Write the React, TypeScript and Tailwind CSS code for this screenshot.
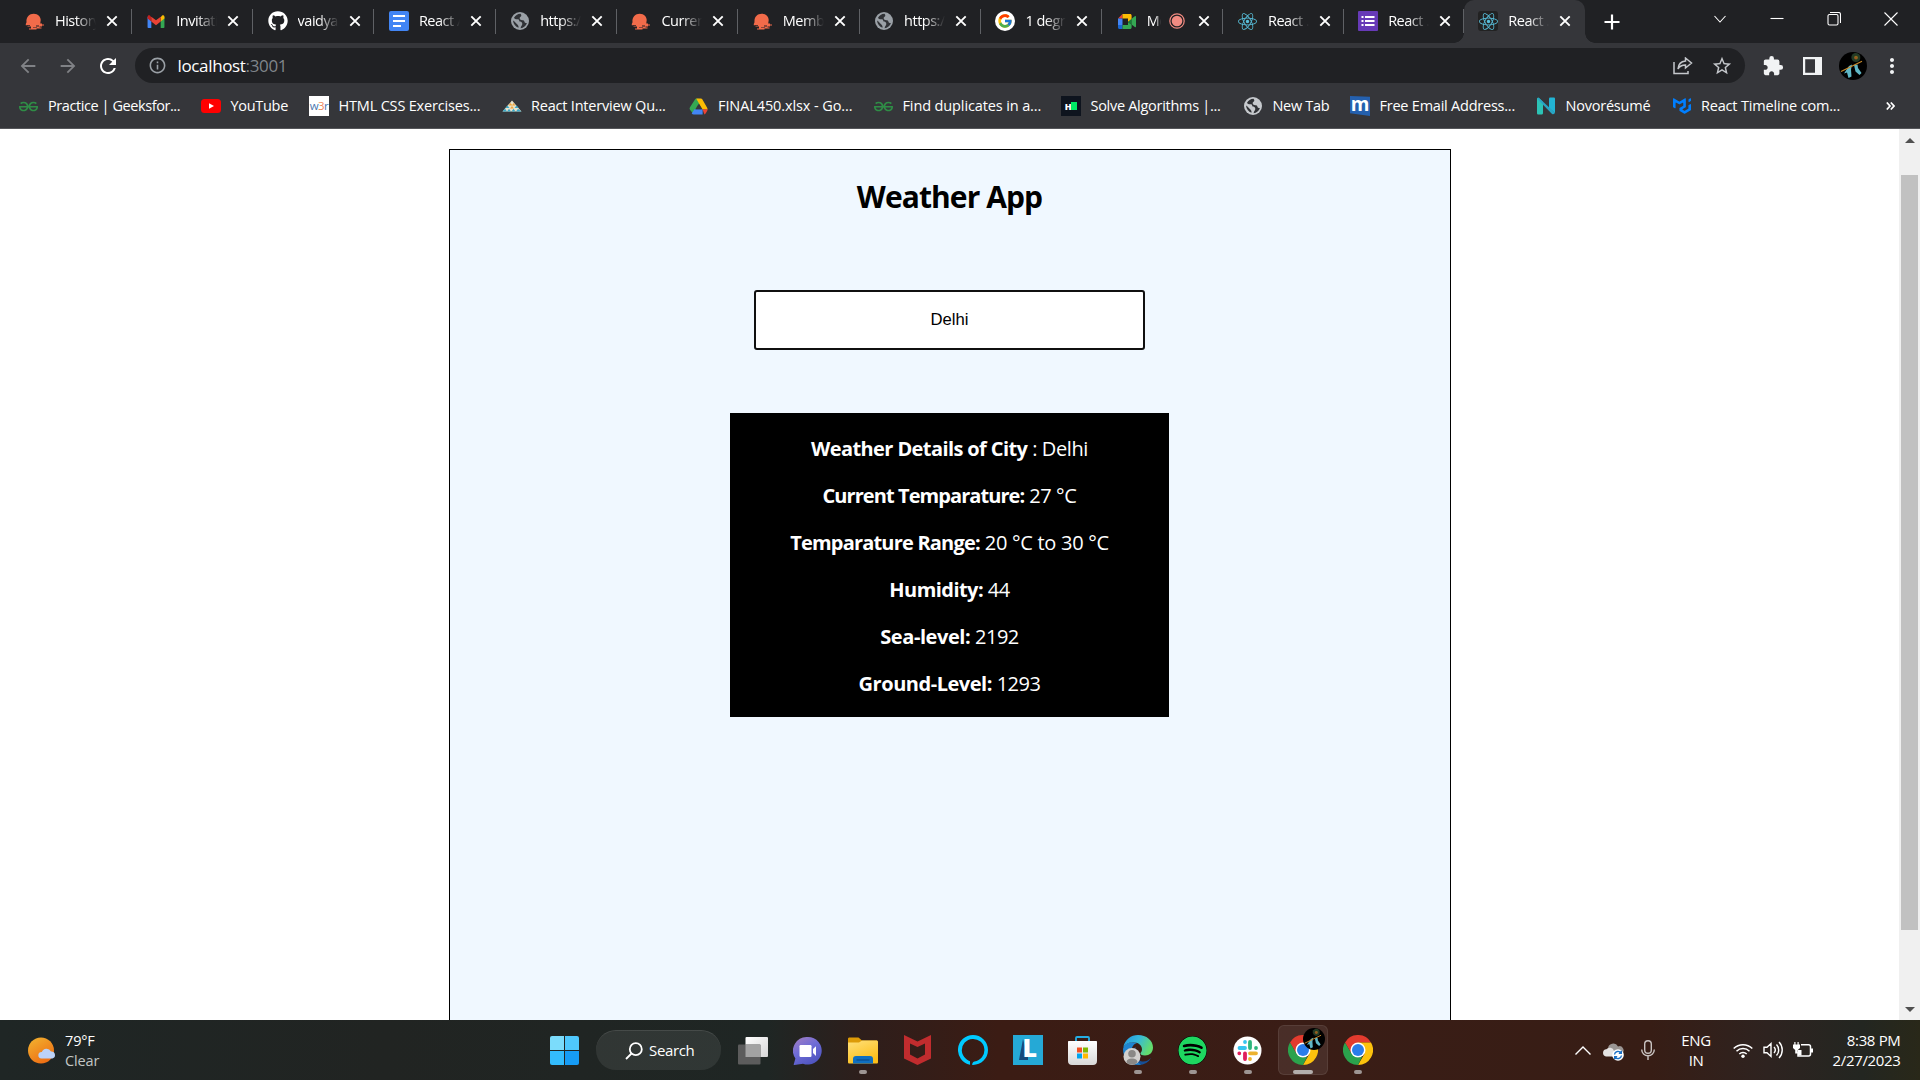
import type { ReactNode } from "react";
import { FaGithub, FaSpotify, FaReact } from "react-icons/fa";
import { FcGoogle } from "react-icons/fc";
import { SiGeeksforgeeks, SiMui } from "react-icons/si";
import { MdArrowBack, MdArrowForward, MdRefresh, MdInfoOutline, MdStarBorder, MdExtension, MdMoreVert } from "react-icons/md";

const PostmanHead = () => (
  <svg viewBox="0 0 20 17" className="h-[17px] w-5">
    <path fill="#f26b4a" d="M1.500 9.200C1 3.800 4.400.7 8.700.7c4.500 0 7.100 3.200 7 6.600-.1 1.200-.5 2.100-.4 3.100h1.700v1h2v1.200h-2v1h-2.500v1h2v1h-5v.8H4v-1h2v-1.800H2.500v-1.400H.8v-1.300z" />
    <path fill="#202124" d="M2 11.900h3v.8H2zM11 12.600h3v.8h-3zM8 14.400h4v.7H8z" />
  </svg>
);
const Gmail = () => (
  <svg viewBox="0 0 20 16" className="h-[15px] w-5">
    <path fill="#4285f4" d="M1 3v11.200c0 .5.400.8.800.8H5V7.500z" />
    <path fill="#34a853" d="M19 3v11.200c0 .5-.4.8-.8.8H15V7.500z" />
    <path fill="#fbbc04" d="M15 3.500l1.500-1.800C17.600.9 19 1.600 19 3v1.700L15 8z" />
    <path fill="#c5221f" d="M5 3.500L3.500 1.700C2.400.9 1 1.600 1 3v1.700L5 8z" />
    <path fill="#ea4335" d="M5 8V2.800l5 3.900 5-3.900V8l-5 3.900z" />
  </svg>
);
const Docs = () => (
  <svg viewBox="0 0 20 20" className="size-5">
    <rect width="20" height="20" rx="2" fill="#4285f4" />
    <path stroke="#fff" strokeWidth="2.200" d="M4 5h12M4 10h12M4 15h8" />
  </svg>
);
const Globe = ({ color = "#9aa0a6" }: { color?: string }) => (
  <svg viewBox="0 0 20 20" className="size-5">
    <circle cx="10" cy="10" r="9" fill={color} />
    <path fill="#303236" d="M10.500 2.800c-3 .2-5.200 1.600-6.500 4 .6 1.500 2.300 1.600 3.800 1.500 1.400 0 1.600 1 1.300 1.900 1.800.4 3.200.8 3.200 2.500 0 1.800-1.400 2.200-1.700 4.600 2.900-.3 5.500-2.400 6.300-5.300-1.200.3-2.400-.2-2.500-1.400-.2-1.600-1.800-1.300-3.200-1.600-1.700-.4-2.100-2.300-.7-3.200 1-.6 1.200-1.700 0-3z" />
    <path fill="#303236" d="M3 9.500c.3 3.300 2.600 6.200 5.500 7.300.2-1.700-.3-2.600-1.400-3.500C5.600 12.100 4.800 10.400 3 9.500z" />
  </svg>
);
const GoogleG = () => (
  <span className="flex size-5 items-center justify-center rounded-full bg-white"><FcGoogle className="size-4" /></span>
);
const Meet = () => (
  <svg viewBox="0 0 20 17" className="h-[17px] w-5">
    <path fill="#ea4335" d="M1 5.500L5.500 1v4.500z" />
    <path fill="#4285f4" d="M1 5.500h4.500v6.500H1z" />
    <path fill="#1967d2" d="M1 12h4.500v4H2.500C1.600 16 1 15.400 1 14.500z" />
    <path fill="#fbbc04" d="M5.500 1h7.500c1 0 1.600.6 1.600 1.500v3.700L11 9V5.500H5.500z" />
    <path fill="#34a853" d="M5.500 12H11V9l3.600 2.700v2.800c0 .9-.6 1.500-1.600 1.500H5.500z" />
    <path fill="#188038" d="M11 9l3.600-3.200v6z" />
    <path fill="#34a853" d="M14.600 5.800l3.200-2.600c.6-.4 1.200-.1 1.200.5v9.900c0 .6-.6.9-1.200.4l-3.200-2.600z" />
  </svg>
);
const Forms = () => (
  <svg viewBox="0 0 20 20" className="size-5">
    <rect width="20" height="20" rx="1" fill="#673ab7" />
    <path stroke="#fff" strokeWidth="2.200" d="M7 6h9.500M7 10h9.500M7 14h9.500" />
    <path stroke="#fff" strokeWidth="2.200" d="M3.500 6h2M3.500 10h2M3.500 14h2" />
  </svg>
);
const ReactIcon = () => (
  <span className="flex size-5 items-center justify-center rounded-[3px] bg-[#222222]"><FaReact className="size-[19px] text-[#61dafb]/85" /></span>
);
const YouTube = () => (
  <svg viewBox="0 0 20 14" className="h-[14px] w-5"><rect width="20" height="14" rx="3.500" fill="#f00" /><path fill="#fff" d="M8 4.200v5.600l5-2.800z" /></svg>
);
const W3r = () => (
  <span className="flex size-5 items-center justify-center bg-white font-['Open_Sans'] text-[11.5px] tracking-[-0.6px] text-[#4c78b0]">w<span className="text-[#f0875a]">3</span>r</span>
);
const Pyramid = () => (
  <svg viewBox="0 0 20 12" className="h-3 w-5">
    <path fill="#e9e3cc" d="M10 .5L19.500 11.500H.5z" />
    <path fill="#3ba9c9" d="M.5 11.500l2.500-3 2 3zM5 11.500l2-2.800 2 2.800zM9.500 11.500l2-2.800 2 2.800zM14 11.500l2-2.800 3.500 2.800zM3.500 8l2-2.500 2 2.500zM12.500 8l2-2.500 2 2.500z" />
    <path fill="#f0a63c" d="M6.500 5.500L8.500 3l2 2.500zM10 5.500L11.500 3l2 2.500zM8 8.500l2-2.500 2 2.500z" />
  </svg>
);
const Drive = () => (
  <svg viewBox="0 0 20 18" className="h-[17px] w-[19px]">
    <path fill="#34a853" d="M6.800.8h3.400L12 4 4.500 17 1 12.500c-.6-1-.6-1.600 0-2.600z" />
    <path fill="#fbbc04" d="M7.500.5h5c.7 0 1.200.3 1.500.9l5.300 9.300c.2.500.2 1 .2 1.500h-5.200z" />
    <path fill="#4285f4" d="M5.700 12h8.700v5.500H5c-1 0-1.600-.4-2.200-1.200z" />
    <path fill="#ea4335" d="M14.200 12h5.400c0 .8-.2 1.300-.6 2l-1.500 2.500c-.3.500-.8.800-1.200 1z" />
    <path fill="#35363a" d="M10 6.300l3.300 5.700H6.700z" />
  </svg>
);
const Hacker = () => (
  <span className="flex size-5 items-center justify-center bg-[#0e141e]">
    <span className="text-[9px] font-black leading-none text-white">H</span><span className="h-2 w-[6px] bg-[#00ea64]" />
  </span>
);
const MailM = () => (
  <span className="flex size-5 items-center justify-center bg-[#2460ae] pb-1 font-['Open_Sans'] text-[19px] leading-none font-bold text-white [clip-path:polygon(0_0,100%_4%,100%_100%,0_86%)]">m</span>
);
const Novo = () => (
  <svg viewBox="0 0 20 18" className="h-[18px] w-5">
    <path fill="#2cc3b5" d="M1 2C1 .8 2.500.4 3.300 1.300L7 5v11c0 1-.8 1.500-1.600 1.500H2.500C1.600 17.500 1 17 1 16z" />
    <path fill="#22b4d4" d="M13 2c0-.9.600-1.400 1.500-1.400h3C18.500.6 19 1.100 19 2v14l-6-5z" />
    <path fill="#28a5c4" d="M3 .9L19 15.800c-.5 1.500-2 1.900-3.200.9L1.200 1.800C1.500.9 2.300.5 3 .9z" />
  </svg>
);

type Tab = { title: string; icon: ReactNode; rec?: boolean; active?: boolean; w: string };
const wide = "w-[121.3px]";
const narrow = "w-[120.2px]";
const tabs: Tab[] = [
  { title: "History", icon: <PostmanHead />, w: wide },
  { title: "Invitati", icon: <Gmail />, w: wide },
  { title: "vaidya", icon: <FaGithub className="size-5 text-white" />, w: wide },
  { title: "React A", icon: <Docs />, w: wide },
  { title: "https://", icon: <Globe />, w: wide },
  { title: "Curren", icon: <PostmanHead />, w: wide },
  { title: "Memb", icon: <PostmanHead />, w: wide },
  { title: "https://", icon: <Globe />, w: wide },
  { title: "1 degr", icon: <GoogleG />, w: wide },
  { title: "Me", icon: <Meet />, rec: true, w: wide },
  { title: "React .", icon: <ReactIcon />, w: narrow },
  { title: "React .", icon: <Forms />, w: narrow },
  { title: "React .", icon: <ReactIcon />, active: true, w: wide },
];

const Cross = () => (
  <svg viewBox="0 0 12 12" className="size-3 shrink-0"><path stroke="#fff" strokeWidth="1.900" d="M1.300 1.300l9.400 9.400M10.700 1.300l-9.400 9.400" /></svg>
);

const TabItem = ({ tab }: { tab: Tab }) => (
  <div className={`relative flex h-full shrink-0 items-center pb-px pl-[14.5px] ${tab.w} ${tab.active ? "rounded-t-[10px] bg-[#35363a]" : ""}`}>
    {tab.active && (
      <>
        <span className="absolute bottom-0 -left-[10px] size-[10px] bg-[radial-gradient(circle_at_0_0,#202124_9.5px,#35363a_10px)]" />
        <span className="absolute -right-[10px] bottom-0 size-[10px] bg-[radial-gradient(circle_at_100%_0,#202124_9.5px,#35363a_10px)]" />
      </>
    )}
    <span className="flex w-5 shrink-0 justify-center">{tab.icon}</span>
    <span className={`ml-[10px] overflow-hidden pb-px text-[14.5px] tracking-[-0.5px] whitespace-nowrap ${tab.rec ? "w-[14px] [mask-image:linear-gradient(to_right,black_60%,transparent)]" : "w-[41px] [mask-image:linear-gradient(to_right,black_50%,transparent)]"}`}>{tab.title}</span>
    {tab.rec && (
      <svg viewBox="0 0 16 16" className="mr-[3px] ml-[8px] size-4 shrink-0"><circle cx="8" cy="8" r="5.300" fill="#f28b82" /><circle cx="8" cy="8" r="7.200" fill="none" stroke="#f28b82" strokeWidth="1.200" /></svg>
    )}
    <span className="ml-[10px]"><Cross /></span>
    {!tab.active && <span className="ml-auto h-[25px] w-px bg-[#5f6165]" />}
  </div>
);

const bookmarks = [
  { t: "Practice | Geeksfor...", w: "w-[182.5px]", ls: "tracking-[-0.42px]", icon: <SiGeeksforgeeks className="size-[19px] text-[#2f8d46]" /> },
  { t: "YouTube", w: "w-[108px]", ls: "tracking-[-0.3px]", icon: <YouTube /> },
  { t: "HTML CSS Exercises...", w: "w-[192.5px]", ls: "tracking-[-0.18px]", icon: <W3r /> },
  { t: "React Interview Qu...", w: "w-[187px]", ls: "tracking-[-0.2px]", icon: <Pyramid /> },
  { t: "FINAL450.xlsx - Go...", w: "w-[184.5px]", ls: "tracking-[-0.1px]", icon: <Drive /> },
  { t: "Find duplicates in a...", w: "w-[188px]", ls: "tracking-[-0.12px]", icon: <SiGeeksforgeeks className="size-[19px] text-[#2f8d46]" /> },
  { t: "Solve Algorithms |...", w: "w-[182px]", ls: "tracking-[-0.29px]", icon: <Hacker /> },
  { t: "New Tab", w: "w-[107px]", ls: "tracking-[-0.33px]", icon: <Globe color="#c6c9cd" /> },
  { t: "Free Email Address...", w: "w-[186px]", ls: "tracking-[-0.23px]", icon: <MailM /> },
  { t: "Novorésumé", w: "w-[135.500px]", ls: "tracking-[-0.22px]", icon: <Novo /> },
  { t: "React Timeline com...", w: "w-[189px]", ls: "tracking-[-0.18px]", icon: <SiMui className="size-[18px] text-[#007fff]" /> },
];

const Krishna = () => (
  <svg viewBox="0 0 28 28" className="size-full">
    <circle cx="14" cy="14" r="14" fill="#000" />
    <path fill="#243a26" d="M13 3c2-3 7-2.500 8 .5.8 3 0 6-3.500 6.500S11 6.500 13 3z" />
    <circle cx="17" cy="5.600" r="1.900" fill="#8a6d1c" /><circle cx="16.700" cy="6" r=".8" fill="#b5382b" />
    <path fill="#5fb7c6" d="M10 14l3-1.500-1 5 .5 7-3 1.500L8 20.500l-3 1zM15 13l3.500-.5L19 16l3.500 5-2 2-4-3.500z" />
    <path stroke="#c98a2c" strokeWidth="1.200" d="M2 19.500L23 9.200" />
  </svg>
);

const details = [
  { label: "Weather Details of City", value: " : Delhi", ls: "tracking-[-0.6px]", vs: "tracking-[-0.4px]" },
  { label: "Current Temparature:", value: " 27 °C", ls: "tracking-[-0.92px]", vs: "tracking-[-0.36px]" },
  { label: "Temparature Range:", value: " 20 °C to 30 °C", ls: "tracking-[-0.8px]", vs: "tracking-[-0.28px]" },
  { label: "Humidity:", value: " 44", ls: "tracking-[-0.55px]", vs: "tracking-[-0.5px]" },
  { label: "Sea-level:", value: " 2192", ls: "tracking-[-0.42px]", vs: "tracking-[-0.5px]" },
  { label: "Ground-Level:", value: " 1293", ls: "tracking-[-0.47px]", vs: "tracking-[-0.5px]" },
];

const Chrome = () => (
  <svg viewBox="0 0 30 30" className="size-[30px]">
    <path fill="#e33b2e" d="M2 7.500a15 15 0 0 1 26 0H15L8.500 18.700z" />
    <path fill="#fcc20d" d="M28 7.500A15 15 0 0 1 15 30l6.500-11.200L15 7.500z" />
    <path fill="#2ba24c" d="M15 30A15 15 0 0 1 2 7.500l6.500 11.300 6.500 3.700 4.200-.9z" />
    <circle cx="15" cy="15" r="7.500" fill="#fff" /><circle cx="15" cy="15" r="6" fill="#2b7de9" />
  </svg>
);
const TaskView = () => (
  <svg viewBox="0 0 30 29" className="h-[29px] w-[30px]">
    <defs><linearGradient id="tv" x2="1" y2="1"><stop stopColor="#fff" /><stop offset="1" stopColor="#d6d6d6" /></linearGradient></defs>
    <rect x="7.500" y="1" width="22.500" height="20" rx="1" fill="url(#tv)" />
    <rect y="8.500" width="22.500" height="20" rx="1" fill="#5c5c5c" />
    <path fill="#a3a3a3" d="M7.500 8.500h15V21h-15z" />
  </svg>
);
const Chat = () => (
  <svg viewBox="0 0 29 29" className="size-[29px]">
    <defs><linearGradient id="ch" x2=".6" y2="1"><stop stopColor="#a77fc0" /><stop offset=".5" stopColor="#6f6cd6" /><stop offset="1" stopColor="#4f55c0" /></linearGradient></defs>
    <path fill="url(#ch)" d="M15 1a13.800 13.800 0 1 1-5 26.700L1.500 29c-.8 0-1-.6-.6-1.200l1.500-5.300A13.800 13.800 0 0 1 15 1z" />
    <rect x="6.500" y="9" width="12" height="12" rx="1.200" fill="#fff" /><path fill="#fff" d="M20 13l3-2.800V20l-3-3z" />
  </svg>
);
const Folder = () => (
  <svg viewBox="0 0 30 27" className="h-[27px] w-[30px]">
    <defs><linearGradient id="fo" x2=".5" y2="1"><stop stopColor="#ffe07a" /><stop offset="1" stopColor="#fcbf1a" /></linearGradient></defs>
    <path fill="#dd9b07" d="M0 2C0 1 .6.500 1.500.5h9l3.500 3h15V9H0z" />
    <path fill="url(#fo)" d="M0 5.500h11l3-2h14.500c1 0 1.500.5 1.500 1.500v20c0 1-.5 1.500-1.500 1.500h-27C.5 26.500 0 26 0 25z" />
    <path fill="#0f6fc0" d="M5 26.500V22c0-2 1-3 3-3h14c2 0 3 1 3 3v4.500z" /><path stroke="#0a4a8c" strokeWidth="1.200" d="M8.500 23h13" />
  </svg>
);
const McAfee = () => (
  <svg viewBox="0 0 27 30" className="h-[30px] w-[27px]"><path fill="#c12c2e" d="M0 0l13.500 6.500L27 0v23.500L13.500 30 0 23.500zM6 8.500v11l7.500 4 7.500-4v-11L13.500 12z" /></svg>
);
const Alexa = () => (
  <svg viewBox="0 0 30 30" className="size-[30px]"><path fill="#00caff" d="M15 0a15 15 0 0 1 0 30c-.8 0-1-.4-.7-1.200.3-1.400 1-2 2.200-2.400A11.300 11.300 0 1 0 3.800 15.500c.2 5 3.700 8.900 8.200 10.700v3.500A15 15 0 0 1 15 0z" /></svg>
);
const LApp = () => (
  <svg viewBox="0 0 30 30" className="size-[30px]">
    <rect width="30" height="30" fill="#25a9d6" />
    <path fill="#164a7c" d="M10 4L6 25h9v-3z" />
    <text x="9.500" y="22.300" fill="#fff" fontFamily="Open Sans" fontWeight="800" fontSize="25">L</text>
  </svg>
);
const Store = () => (
  <svg viewBox="0 0 29 29" className="size-[29px]">
    <defs><linearGradient id="st" x2="0" y2="1"><stop stopColor="#fff" /><stop offset="1" stopColor="#d8d8d8" /></linearGradient></defs>
    <path fill="none" stroke="#25aee4" strokeWidth="1.800" d="M8 6V2c0-.7.300-1 1-1h11c.7 0 1 .3 1 1v4" />
    <path fill="url(#st)" d="M0 6c0-.7.400-1 1-1h27c.6 0 1 .3 1 1v19c0 2.500-1.500 4-4 4H4c-2.500 0-4-1.500-4-4z" />
    <path fill="#f25022" d="M9 11.500h5v5H9z" /><path fill="#7fba00" d="M15 11.500h5v5h-5z" /><path fill="#00a4ef" d="M9 17.500h5v5H9z" /><path fill="#ffb900" d="M15 17.500h5v5h-5z" />
  </svg>
);
const Edge = () => (
  <svg viewBox="0 0 30 30" className="size-[30px]">
    <defs>
      <linearGradient id="ed" x2="1" y2=".4"><stop stopColor="#2394dc" /><stop offset=".5" stopColor="#35b8dc" /><stop offset="1" stopColor="#63dc6e" /></linearGradient>
    </defs>
    <path fill="#164f96" d="M13 12c-4 6-1 13.500 6 14.500 4 .4 7-1.500 9-3.700-2 4.500-7 7.200-12 7.200C9 30 3 25 2 18z" />
    <path fill="#1f84d0" d="M0 14c1-6 8-8 14-6-4 1-6 5-5 10 1 6 5 9 9 11.600C8 31 0 25 0 14z" />
    <path fill="url(#ed)" d="M.3 12C2 4.500 8 0 15 0c8.500 0 15 5.500 15 12.500 0 5-3.500 8-8 8-3.500 0-5-1.300-4.500-2.300.4-.9 1.500-1.500 1.500-4C19 10 15 7.200 10 7.200 6 7.200 2.500 9 .3 12z" />
    <circle cx="9" cy="21.500" r="8.500" fill="#d2d0ce" /><circle cx="9" cy="18.800" r="3.800" fill="#8a8886" /><path fill="#8a8886" d="M3.500 27.500c0-3 2.400-4 5.500-4s5.500 1 5.500 4a8 8 0 0 1-11 0z" />
  </svg>
);
const Slack = () => (
  <svg viewBox="0 0 29 29" className="size-[29px]">
    <circle cx="14.500" cy="14.500" r="14" fill="#fff" />
    <g strokeWidth="3.800" strokeLinecap="round">
      <path stroke="#36c5f0" d="M12 6v0M6.500 12H12" /><path stroke="#2eb67d" d="M17 6v6M23 12v0" />
      <path stroke="#ecb22e" d="M17 17.300h6M17 23v0" /><path stroke="#e01e5a" d="M12 17.300V23M6.300 17.300v0" />
    </g>
  </svg>
);

const apps: { icon: ReactNode; open?: boolean; active?: boolean }[] = [
  { icon: <TaskView /> },
  { icon: <Chat /> },
  { icon: <Folder />, open: true },
  { icon: <McAfee /> },
  { icon: <Alexa /> },
  { icon: <LApp /> },
  { icon: <Store /> },
  { icon: <Edge />, open: true },
  { icon: <FaSpotify className="size-[29px] rounded-full bg-black text-[#1ed760]" />, open: true },
  { icon: <Slack />, open: true },
  { icon: <Chrome />, active: true },
  { icon: <Chrome />, open: true },
];

export default function App() {
  return (
    <div className="flex h-[1080px] w-[1920px] flex-col overflow-hidden bg-white font-['Open_Sans','Noto_Sans',sans-serif]">
      <header className="flex h-[129px] shrink-0 flex-col border-b border-[#55565a] bg-[#35363a] text-white">
        <div className="flex h-[43px] bg-[#202124] pl-[10.5px]">
          {tabs.map((t, i) => <TabItem key={i} tab={t} />)}
          <svg viewBox="0 0 16 16" className="mt-[13.5px] ml-[18.5px] size-4"><path stroke="#fff" strokeWidth="2.200" d="M8 .500v15M.5 8h15" /></svg>
          <div className="ml-auto flex h-[37px] items-center">
            {[
              "M1.500 4l5.500 6 5.500-6",
              "M.5 6.500h13",
              "M3 .500h8.500a2 2 0 0 1 2 2V11M2.500 2.500h7a1.500 1.500 0 0 1 1.500 1.500v7.500a1.500 1.500 0 0 1-1.500 1.500h-7A1.500 1.500 0 0 1 1 11.500V4a1.500 1.500 0 0 1 1.500-1.500z",
              "M.5.500l13 13M13.500.500l-13 13",
            ].map((d) => (
              <span key={d} className="flex w-[57.2px] justify-center"><svg viewBox="0 0 14 14" className="size-[14px]"><path fill="none" stroke="#fff" strokeWidth="1.100" d={d} /></svg></span>
            ))}
          </div>
        </div>
        <div className="flex h-[45px] shrink-0 items-center pl-[16.5px] text-white">
          <MdArrowBack className="size-[22px] text-[#808286]" />
          <MdArrowForward className="ml-[18px] size-[22px] text-[#808286]" />
          <MdRefresh className="ml-[17px] size-[24px]" />
          <div className="ml-[15px] flex h-[35px] w-[1610px] items-center rounded-full bg-[#202124] pl-[13px]">
            <MdInfoOutline className="size-[19px] text-[#9aa0a6]" />
            <span className="ml-[11px] text-[17px] tracking-[-0.35px]">localhost<span className="text-[#9aa0a6]/80">:3001</span></span>
            <svg viewBox="0 0 20 18" className="ml-auto h-[18px] w-5"><path fill="none" stroke="#c4c7cb" strokeWidth="1.500" d="M1 5v11.500h14V14M12.500 1l6 5-6 5V8c-3.500 0-6 1.300-7.500 4 .3-4.500 3-7.500 7.500-8z" /></svg>
            <MdStarBorder className="mr-[11.5px] ml-[18px] size-[22px] text-[#c4c7cb]" />
          </div>
          <MdExtension className="ml-[17px] size-[22px] text-[#f1f3f4]" />
          <svg viewBox="0 0 19 18" className="ml-[19px] h-[18px] w-[19px]"><path fill="none" stroke="#f1f3f4" strokeWidth="2.200" d="M1.100 1.100h16.800v15.800H1.100z" /><path fill="#f1f3f4" d="M12 0h7v18h-7z" /></svg>
          <span className="ml-[17px] size-7"><Krishna /></span>
          <MdMoreVert className="ml-[13.5px] size-[24px] text-[#f1f3f4]" />
        </div>
        <div className="flex h-[36px] shrink-0 items-center pl-[18.5px] text-[14.5px]">
          {bookmarks.map((b) => (
            <div key={b.t} className={`flex shrink-0 items-center whitespace-nowrap ${b.w} ${b.ls}`}>
              <span className="mr-[9.5px] flex w-5 shrink-0 justify-center">{b.icon}</span>
              {b.t}
            </div>
          ))}
          <svg viewBox="0 0 9 8" className="ml-[25px] h-2 w-[9px]"><path fill="none" stroke="#fff" strokeWidth="1.700" d="M.8.500L4 4 .8 7.500M4.800.500L8 4 4.800 7.500" /></svg>
        </div>
      </header>

      <main className="flex min-h-0 flex-1">
        <div className="flex flex-1 justify-center overflow-hidden">
          <section className="mt-5 flex h-[1100px] w-[1002px] shrink-0 flex-col items-center border border-black bg-[#f0f8ff] text-black">
            <h1 className="mt-[26px] text-[30px] leading-[42px] font-bold tracking-[-0.92px]">Weather App</h1>
            <div className="mt-[72px] flex h-[60px] w-[391px] items-center justify-center rounded-[3px] border-2 border-[#101010] bg-white pb-px font-['Liberation_Sans',sans-serif] text-[16.67px]">Delhi</div>
            <div className="mt-[63px] flex h-[304px] w-[439px] flex-col bg-black pt-[12px] text-[20px] text-white">
              {details.map((d) => (
                <p key={d.label} className="h-[47px] text-center leading-[47px] whitespace-pre">
                  <b className={d.ls}>{d.label}</b><span className={d.vs}>{d.value}</span>
                </p>
              ))}
            </div>
          </section>
        </div>
        <div className="flex w-[21px] flex-col items-center bg-[#f0f0f0]">
          <svg viewBox="0 0 10 5" className="mt-[9px] h-[5px] w-[10px]"><path fill="#505050" d="M5 0l5 5H0z" /></svg>
          <div className="mt-[32px] h-[755px] w-[17px] bg-[#c1c1c1]" />
          <svg viewBox="0 0 10 5" className="mt-auto mb-[8px] h-[5px] w-[10px]"><path fill="#505050" d="M0 0h10L5 5z" /></svg>
        </div>
      </main>

      <footer className="flex h-[60px] shrink-0 items-center bg-[linear-gradient(90deg,#1f2625_0%,#212422_20%,#1f2624_40%,#2e1e1b_45%,#3b1c14_52%,#3a1d16_68%,#371d15_86%,#2e2320_92%,#232621_97%,#292819_100%)] text-[15px] text-white">
        <div className="flex w-[522px] items-center pl-[28px]">
          <svg viewBox="0 0 28 27" className="h-[27px] w-7">
            <defs><linearGradient id="sun" x2=".6" y2="1"><stop stopColor="#f2b530" /><stop offset="1" stopColor="#ee6f14" /></linearGradient></defs>
            <circle cx="13" cy="13.500" r="13" fill="url(#sun)" />
            <path fill="#bcd2f7" d="M13.500 21.500a3.300 3.300 0 0 1 .3-6.600 5 5 0 0 1 9.200-.4 3.600 3.600 0 0 1 1.500 7z" />
          </svg>
          <div className="ml-[9px] pt-[2px] text-[14.5px] leading-5 tracking-[-0.15px]">
            <div>79°F</div>
            <div className="text-[#c3c6c5]">Clear</div>
          </div>
        </div>
        <div className="flex w-[74px] justify-center pl-[11px]">
          <div className="grid size-[29px] grid-cols-2 gap-px">
            <span className="rounded-tl-xs bg-[#7bdcfb]" /><span className="rounded-tr-xs bg-[#4fc8fd]" /><span className="rounded-bl-xs bg-[#33bcfd]" /><span className="rounded-br-xs bg-[#169cf5]" />
          </div>
        </div>
        <div className="flex h-10 w-[125px] items-center rounded-full border-t border-white/10 bg-white/8 pl-[29px]">
          <svg viewBox="0 0 18 18" className="size-[18px]"><g fill="none" stroke="#fff" strokeWidth="1.800"><circle cx="10.800" cy="7.200" r="6" /><path d="M6.500 11.500L1 17" /></g></svg>
          <span className="ml-[6px] tracking-[-0.35px]">Search</span>
        </div>
        <div className="ml-[4px] flex h-full">
          {apps.map((a, i) => (
            <div key={i} className="relative flex h-full w-[55.05px] items-center justify-center">
              {a.active ? (
                <div className="flex h-[50px] w-[50px] items-center justify-center rounded-md border border-white/8 bg-white/8">{a.icon}</div>
              ) : a.icon}
              {a.active && <span className="absolute top-[8px] right-[6px] size-[22px]"><Krishna /></span>}
              {a.active && <span className="absolute bottom-[6px] h-1 w-5 rounded-full bg-[#b3aeac]" />}
              {a.open && <span className="absolute bottom-[6px] h-1 w-2 rounded-full bg-[#9d9593]" />}
            </div>
          ))}
        </div>
        <div className="ml-auto flex items-center pr-[19.5px] tracking-[-0.4px]">
          <svg viewBox="0 0 16 9" className="h-[9px] w-4"><path fill="none" stroke="#fff" strokeWidth="1.400" d="M.5 8.500L8 1l7.500 7.500" /></svg>
          <svg viewBox="0 0 21 18" className="ml-[11.5px] mt-[3px] h-[18px] w-[21px]">
            <path fill="#9b9694" d="M5 6a5.300 5.300 0 0 1 10-2.500A4 4 0 0 1 18 11H5z" /><path fill="#e5e3e2" d="M3 13.500a3.700 3.700 0 0 1 .3-7.300A4.500 4.500 0 0 1 11 8v5.500z" />
            <circle cx="15" cy="12" r="5.800" fill="#fff" /><path fill="none" stroke="#1a6fc4" strokeWidth="1.400" d="M11.500 11.500a3.600 3.600 0 0 1 6.500-1.600M18.500 12.500a3.600 3.600 0 0 1-6.500 1.600M18.300 7.800v2.500h-2.500M11.700 16.200v-2.500h2.500" />
          </svg>
          <svg viewBox="0 0 14 20" className="ml-[17.5px] h-5 w-[14px]"><g fill="none" stroke="#c9c3c1" strokeWidth="1.400"><rect x="3.700" y=".7" width="6.600" height="12.500" rx="3.300" /><path d="M.7 9.500a6.300 6.300 0 0 0 12.600 0M7 16v4" /></g></svg>
          <div className="ml-[25px] w-[32px] text-center leading-5 whitespace-nowrap"><div>ENG</div><div>IN</div></div>
          <svg viewBox="0 0 20 15" className="ml-[20.5px] h-[15px] w-5"><g fill="none" stroke="#fff" strokeWidth="1.500"><path d="M.7 5.500a13.200 13.200 0 0 1 18.600 0M3.500 8.300a9.200 9.200 0 0 1 13 0M6.300 11a5.200 5.200 0 0 1 7.400 0" /></g><circle cx="10" cy="13.200" r="1.700" fill="#fff" /></svg>
          <svg viewBox="0 0 20 18" className="ml-[10px] h-[18px] w-5"><path fill="none" stroke="#fff" strokeWidth="1.400" d="M1 6.200h3L8 2.500v13L4 11.800H1zM11 6a4.500 4.500 0 0 1 0 6M13.500 3.500a8 8 0 0 1 0 11M16 1a11.500 11.500 0 0 1 0 16" /></svg>
          <svg viewBox="0 0 20 16" className="ml-[10px] h-4 w-5"><path fill="none" stroke="#fff" strokeWidth="1.500" d="M8 2.800h7.500a2 2 0 0 1 2 2V12a2 2 0 0 1-2 2H5v-4" /><path fill="#fff" d="M18 6.500h2v4h-2zM1.300 0h1.200v2.500h2V0h1.200v2.500H7V6L4.800 8v3.500H2.200V8L0 6V2.500h1.300zM5 8h3.500v5.500H5z" /></svg>
          <div className="ml-[20px] text-right leading-5 tracking-[-0.34px] whitespace-nowrap"><div>8:38 PM</div><div>2/27/2023</div></div>
        </div>
      </footer>
    </div>
  );
}
